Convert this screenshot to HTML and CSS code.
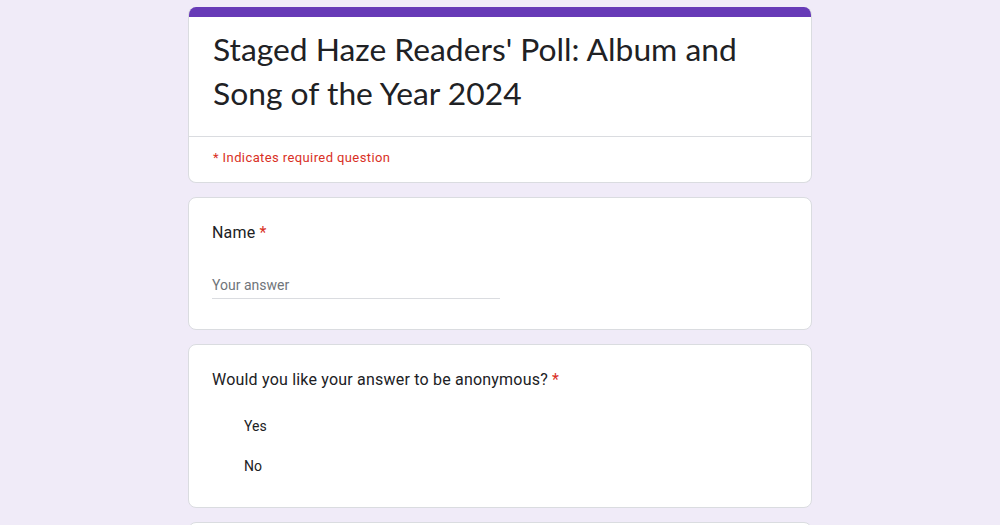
FILE: index.html
```html
<!DOCTYPE html>
<html lang="en">
<head>
<meta charset="utf-8">
<title>Staged Haze Readers' Poll</title>
<link rel="stylesheet" href="styles.css">
</head>
<body>
<main class="form">
  <section class="card header-card">
    <div class="accent"></div>
    <div class="title-block">
      <h1 class="title">Staged Haze Readers' Poll: Album and Song of the Year 2024</h1>
    </div>
    <div class="required-note">* Indicates required question</div>
  </section>

  <section class="card question name-q">
    <div class="q-label">Name <span class="star">*</span></div>
    <div class="text-input">Your answer</div>
  </section>

  <section class="card question radio-q">
    <div class="q-label">Would you like your answer to be anonymous? <span class="star">*</span></div>
    <div class="options">
      <div class="option">Yes</div>
      <div class="option">No</div>
    </div>
  </section>

  <section class="card question"></section>
</main>
</body>
</html>
```

FILE: styles.css
```css
* { box-sizing: border-box; }
html, body { margin: 0; padding: 0; }
body {
  background: #f0ebf8;
  font-family: Roboto, "Liberation Sans", sans-serif;
  color: #202124;
  height: 525px;
  overflow: hidden;
}
.form {
  width: 624px;
  margin: 7px auto 0;
  display: flex;
  flex-direction: column;
  gap: 14px;
}
.card {
  background: #fff;
  border: 1px solid #dadce0;
  border-radius: 8px;
  overflow: hidden;
}
.header-card { border-top: none; }
.accent {
  height: 10px;
  background: #673ab7;
}
.title-block {
  padding: 10px 24px 21px;
  border-bottom: 1px solid #dadce0;
}
.title {
  margin: 0;
  font-family: Lato, Roboto, sans-serif;
  font-weight: 400;
  font-size: 31.8px;
  line-height: 44px;
  color: #202124;
}
.required-note {
  padding: 12px 24px 16px;
  font-size: 13px;
  line-height: 17px;
  letter-spacing: 0.4px;
  color: #d93025;
}
.question {
  padding: 23px 23px 32px;
}
.q-label {
  font-size: 16px;
  line-height: 24px;
  letter-spacing: 0.2px;
}
.star { color: #d93025; }
.name-q { padding-bottom: 30px; }
.text-input {
  margin-top: 30px;
  width: 288px;
  font-size: 14px;
  line-height: 20px;
  color: #70757a;
  padding-bottom: 3px;
  border-bottom: 1px solid #dadce0;
}
.options {
  margin-top: 24px;
  padding-left: 32px;
  display: flex;
  flex-direction: column;
  gap: 20px;
}
.option {
  font-size: 14px;
  line-height: 20px;
}
.radio-q { padding-bottom: 31px; }
```
